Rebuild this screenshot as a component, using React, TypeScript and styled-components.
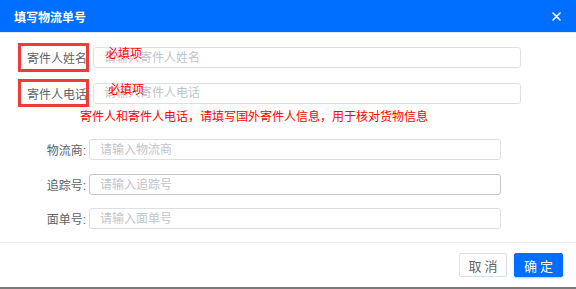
import styled, { createGlobalStyle } from 'styled-components'

const GlobalStyle = createGlobalStyle`
  html, body {
    margin: 0;
    padding: 0;
    background: #ffffff;
  }
  body {
    font-family: "Liberation Sans", "Noto Sans CJK SC", sans-serif;
  }
`;

const Dialog = styled.div`
  width: 576px;
  height: 289px;
  box-sizing: border-box;
  background: #fff;
  border-bottom: 2px solid #7a7a7a;
  display: flex;
  flex-direction: column;
`;

const Header = styled.div`
  height: 32px;
  background: #006eff;
  border-bottom: 1px solid #e4ecf7;
  display: flex;
  align-items: center;
  justify-content: space-between;
  padding: 0 14px 0 14px;
`;

const Title = styled.h3`
  margin: 0;
  font-size: 12px;
  font-weight: 700;
  color: #fff;
`;

const Close = styled.button`
  width: 12px;
  height: 12px;
  padding: 0;
  border: 0;
  background: transparent;
  display: flex;
  align-items: center;
  justify-content: center;
  cursor: pointer;
  margin-top: 1px;
`;

const Body = styled.div`
  padding: 10px 0 13px 0;
  display: flex;
  flex-direction: column;
`;

const Row = styled.div<{ top?: number, height: number }>`
  display: flex;
  align-items: center;
  height: ${(props) => props.height}px;
  margin-top: ${(props) => props.top || 0}px;
`;

const MarkedLabel = styled.label`
  box-sizing: border-box;
  width: 71px;
  height: 100%;
  margin-left: 18px;
  margin-right: 4px;
  border: 3px solid #f23a3a;
  padding-left: 6px;
  display: flex;
  align-items: center;
  font-size: 12px;
  color: #606266;
  white-space: nowrap;
  overflow: visible;
`;

const Label = styled.label`
  width: 86px;
  margin-right: 3px;
  text-align: right;
  font-size: 12px;
  color: #606266;
  white-space: nowrap;
`;

const Field = styled.div`
  position: relative;
  display: flex;
`;

const Input = styled.input<{ width: number, hovered?: boolean }>`
  box-sizing: border-box;
  width: ${(props) => props.width}px;
  height: 21px;
  padding: 0 10px;
  border: 1px solid ${(props) => (props.hovered ? '#c0c4cc' : '#dcdfe6')};
  border-radius: 3px;
  outline: none;
  font-family: inherit;
  font-size: 12px;
  color: #606266;
  background: #fff;
  &::placeholder {
    color: #c0c4cc;
  }
`;

const Required = styled.span<{ left: number }>`
  position: absolute;
  left: ${(props) => props.left}px;
  top: -1px;
  font-size: 12px;
  line-height: 16px;
  color: #ff0000;
  pointer-events: none;
`;

const Note = styled.p`
  margin: 2px 0 0 80px;
  font-size: 12px;
  line-height: 16px;
  color: #ff0000;
  white-space: nowrap;
`;

const Footer = styled.div`
  border-top: 1px solid #f0f2f5;
  padding: 10px 13px 10px 0;
  display: flex;
  justify-content: flex-end;
  gap: 7px;
`;

const Button = styled.button<{ primary?: boolean }>`
  box-sizing: border-box;
  width: ${(props) => (props.primary ? 49 : 48)}px;
  height: 24px;
  padding: 0 0 0 3px;
  border: 1px solid ${(props) => (props.primary ? '#006eff' : '#dcdfe6')};
  border-radius: 2px;
  background: ${(props) => (props.primary ? '#006eff' : '#fff')};
  color: ${(props) => (props.primary ? '#fff' : '#606266')};
  box-shadow: ${(props) => (props.primary ? '0 1px 2px rgba(0, 60, 160, 0.3)' : 'none')};
  font-family: inherit;
  font-size: 13px;
  letter-spacing: 3px;
  cursor: pointer;
`;

const CloseIcon = () =>
  <svg width="9" height="9" viewBox="0 0 9 9">
    <path d="M1 1 L8 8 M8 1 L1 8" stroke="#fff" strokeWidth="1.6" strokeLinecap="round" />
  </svg>

export default function App() {
  return (
    <>
      <GlobalStyle />
      <Dialog>
        <Header>
          <Title>填写物流单号</Title>
          <Close aria-label="close"><CloseIcon /></Close>
        </Header>
        <Body>
          <Row height={29}>
            <MarkedLabel>寄件人姓名</MarkedLabel>
            <Field>
              <Input width={428} placeholder="请输入寄件人姓名" />
              <Required left={13}>必填项</Required>
            </Field>
          </Row>
          <Row height={28} top={7}>
            <MarkedLabel>寄件人电话:</MarkedLabel>
            <Field>
              <Input width={428} placeholder="请输入寄件人电话" />
              <Required left={15}>必填项</Required>
            </Field>
          </Row>
          <Note>寄件人和寄件人电话，请填写国外寄件人信息，用于核对货物信息</Note>
          <Row height={21} top={14}>
            <Label>物流商:</Label>
            <Input width={412} placeholder="请输入物流商" />
          </Row>
          <Row height={21} top={14}>
            <Label>追踪号:</Label>
            <Input width={412} hovered placeholder="请输入追踪号" />
          </Row>
          <Row height={21} top={13}>
            <Label>面单号:</Label>
            <Input width={412} placeholder="请输入面单号" />
          </Row>
        </Body>
        <Footer>
          <Button>取消</Button>
          <Button primary>确定</Button>
        </Footer>
      </Dialog>
    </>
  )
}
